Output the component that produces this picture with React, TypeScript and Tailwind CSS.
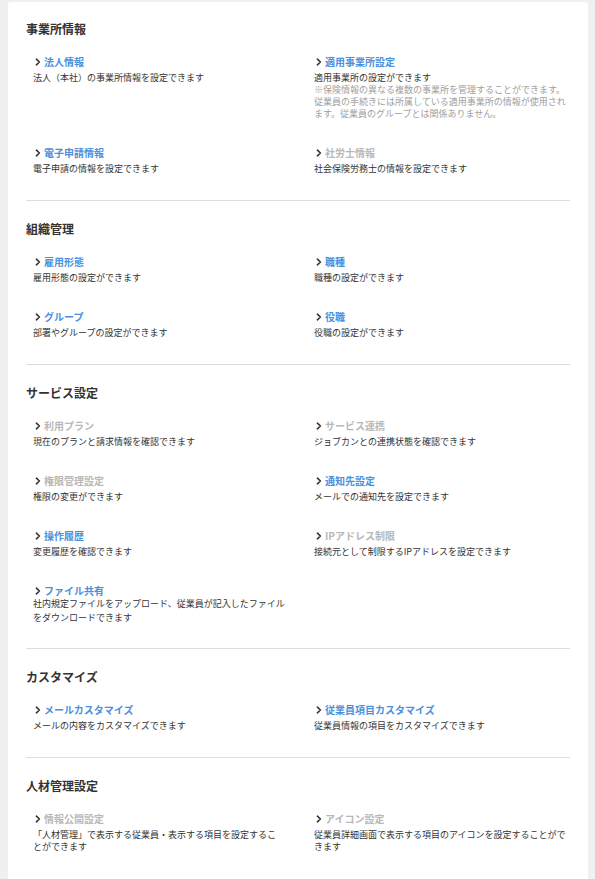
import React from "react";

type Item = {
  title: string;
  active: boolean;
  desc: React.ReactNode;
  note?: React.ReactNode;
  descCls?: string;
};

type Section = { heading: string; items: Item[]; pb?: string };

const sections: Section[] = [
  {
    heading: "事業所情報",
    items: [
      { title: "法人情報", active: true, desc: "法人（本社）の事業所情報を設定できます" },
      {
        title: "適用事業所設定",
        active: true,
        desc: "適用事業所の設定ができます",
        note: (
          <>
            ※保険情報の異なる複数の事業所を管理することができます。
            <br />
            従業員の手続きには所属している適用事業所の情報が使用され
            <br />
            ます。従業員のグループとは関係ありません。
          </>
        ),
      },
      { title: "電子申請情報", active: true, desc: "電子申請の情報を設定できます" },
      { title: "社労士情報", active: false, desc: "社会保険労務士の情報を設定できます" },
    ],
  },
  {
    heading: "組織管理",
    items: [
      { title: "雇用形態", active: true, desc: "雇用形態の設定ができます" },
      { title: "職種", active: true, desc: "職種の設定ができます" },
      { title: "グループ", active: true, desc: "部署やグループの設定ができます" },
      { title: "役職", active: true, desc: "役職の設定ができます" },
    ],
  },
  {
    heading: "サービス設定",
    pb: "pb-[23px]",
    items: [
      { title: "利用プラン", active: false, desc: "現在のプランと請求情報を確認できます" },
      { title: "サービス連携", active: false, desc: "ジョブカンとの連携状態を確認できます" },
      { title: "権限管理設定", active: false, desc: "権限の変更ができます" },
      { title: "通知先設定", active: true, desc: "メールでの通知先を設定できます" },
      { title: "操作履歴", active: true, desc: "変更履歴を確認できます" },
      { title: "IPアドレス制限", active: false, desc: "接続元として制限するIPアドレスを設定できます" },
      {
        title: "ファイル共有",
        active: true,
        descCls: "-mt-[2px] leading-[14px]",
        desc: (
          <>
            社内規定ファイルをアップロード、従業員が記入したファイル
            <br />
            をダウンロードできます
          </>
        ),
      },
    ],
  },
  {
    heading: "カスタマイズ",
    items: [
      { title: "メールカスタマイズ", active: true, desc: "メールの内容をカスタマイズできます" },
      { title: "従業員項目カスタマイズ", active: true, desc: "従業員情報の項目をカスタマイズできます" },
    ],
  },
  {
    heading: "人材管理設定",
    items: [
      {
        title: "情報公開設定",
        active: false,
        desc: (
          <>
            「人材管理」で表示する従業員・表示する項目を設定するこ
            <br />
            とができます
          </>
        ),
      },
      {
        title: "アイコン設定",
        active: false,
        desc: (
          <>
            従業員詳細画面で表示する項目のアイコンを設定することがで
            <br />
            きます
          </>
        ),
      },
    ],
  },
];

function Chevron() {
  return (
    <svg width="6" height="8" viewBox="0 0 6 8" className="ml-[2px] mr-[3px] shrink-0">
      <path d="M1.4 1.2 L4.4 4 L1.4 6.8" fill="none" stroke="#333" strokeWidth="1.6" strokeLinecap="round" strokeLinejoin="round" />
    </svg>
  );
}

function ItemView({ item }: { item: Item }) {
  return (
    <div className="flex flex-col">
      <div className="flex items-center h-[16px]">
        <Chevron />
        <span
          className={
            "text-[10px] leading-[16px] font-bold " +
            (item.active ? "text-[#4a90dc]" : "text-[#b8b8b8]")
          }
        >
          {item.title}
        </span>
      </div>
      <div className={"text-[9px] text-[#333] whitespace-nowrap " + (item.descCls ?? "mt-[2px] leading-[12px]")}>
        {item.desc}
      </div>
      {item.note && (
        <div className="text-[9px] leading-[12px] text-[#a0a0a0] whitespace-nowrap">{item.note}</div>
      )}
    </div>
  );
}

export default function App() {
  return (
    <div
      className="min-h-[879px] bg-[#f0f0f0] pl-[8px] pr-[7px] pt-[2px]"
      style={{ fontFamily: '"Noto Sans CJK JP", "Noto Sans", sans-serif' }}
    >
      <div className="bg-white rounded-[3px] px-[18px] pt-[19px] pb-[40px]">
        {sections.map((s, i) => (
          <div key={s.heading}>
            {i > 0 && <div className="h-px bg-[#dddddd]" />}
            <div className={(i > 0 ? "pt-[20px] " : "") + (s.pb ?? "pb-[25px]")}>
              <h2 className="text-[12px] leading-[16px] font-bold text-[#333]">{s.heading}</h2>
              <div className="mt-[17px] pl-[7px] grid grid-cols-[281px_1fr] gap-y-[25px]">
                {s.items.map((it) => (
                  <ItemView key={it.title} item={it} />
                ))}
              </div>
            </div>
          </div>
        ))}
      </div>
    </div>
  );
}
